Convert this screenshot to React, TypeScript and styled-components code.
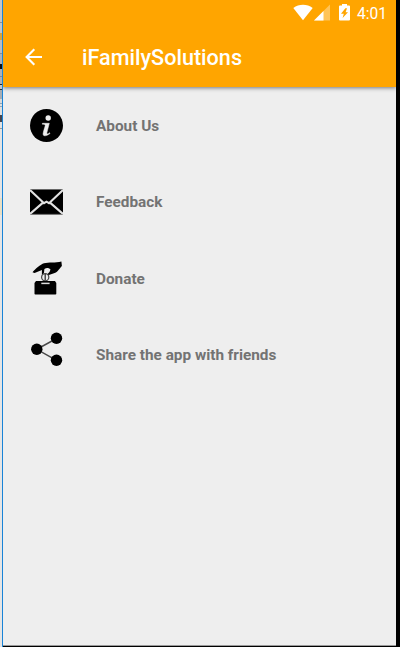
import React from "react";
import styled, { createGlobalStyle } from "styled-components";

const GlobalStyle = createGlobalStyle`
  * { box-sizing: border-box; }
  body { margin: 0; font-family: Roboto, sans-serif; background: #000; overflow: hidden; }
`;

const Desktop = styled.div`
  display: flex;
  width: 400px;
  height: 647px;
  background: #000;
`;

const WindowEdge = styled.div`
  flex: none;
  width: 3px;
  height: 647px;
  border-right: 1px solid #1883d7;
  background: linear-gradient(
    #c6c6c6 0 22px, #8d8f92 22px 23px, #c3c5c9 23px 33px, #d6a43c 33px 40px,
    #b9bcc1 40px 53px, #8c8e91 53px 54px, #adb1b6 54px 64px, #111 64px 69px,
    #adb1b6 69px 76px, #85888c 76px 77px, #adb1b6 77px 84px, #222 84px 85px,
    #c4c4c4 85px 89px, #333 89px 90px, #a7adb3 90px 99px, #d9d9d9 99px 103px,
    #8fa5b5 103px 104px, #e0e0e0 104px 106px, #8fa5b5 106px 107px,
    #e0e0e0 107px 115px, #46464e 115px 122px, #e2e2e2 122px 128px,
    #999 128px 129px, #e4e4e4 129px 198px, #e9dfc4 198px 215px, #e5e5e5 215px
  );
`;

const Screen = styled.div`
  display: flex;
  flex-direction: column;
  width: 393px;
  height: 646px;
  background: #eee;
  border-bottom: 1px solid #999;
`;

const Header = styled.header`
  flex: none;
  height: 87px;
  background: #ffa500;
  box-shadow: 0 1px 4px rgba(0, 0, 0, 0.5);
  clip-path: inset(0 0 -6px 0);
`;

const StatusBar = styled.div`
  display: flex;
  height: 27px;
  padding: 4px 9px 0 0;
  justify-content: flex-end;
  color: #fff;
`;

const Clock = styled.span`
  margin-left: 7px;
  padding-top: 1px;
  font-size: 15.6px;
  line-height: 19px;
`;

const Toolbar = styled.div`
  display: flex;
  align-items: center;
  height: 60px;
  padding: 0 0 0 22px;
`;

const Title = styled.h1`
  margin: 2px 0 0 40px;
  font-size: 21.6px;
  line-height: 28px;
  font-weight: 500;
  color: #fff;
`;

const Menu = styled.ul`
  display: flex;
  flex-direction: column;
  margin: 0;
  padding: 0;
  list-style: none;
`;

const MenuRow = styled.li`
  display: flex;
  align-items: center;
  height: 76.4px;
  padding-left: 27px;
`;

const IconSlot = styled.span<{ $raise?: number }>`
  flex: none;
  display: flex;
  width: 33px;
  margin: 0 33px ${(p) => (p.$raise ?? 0) * 2}px 0;
`;

const Label = styled.span`
  padding-top: 1.7px;
  font-size: 15.34px;
  line-height: 20px;
  font-weight: 700;
  color: #737373;
`;

const WifiIcon = () => (
  <svg width="20" height="17" viewBox="0 0 20 17">
    <path d="M.3 4C6-.2 14-.2 19.7 4L10 16.2Z" fill="#fff" />
  </svg>
);

const SignalIcon = () => (
  <svg width="16" height="17" viewBox="0 0 16 17">
    <path d="M0 16.5 16 .5v16Z" fill="#fff" opacity=".35" />
    <path d="M0 16.5 9.5 7v9.5Z" fill="#fff" />
  </svg>
);

const BatteryIcon = () => (
  <svg width="11" height="17" viewBox="0 0 11 17">
    <path d="M3 0h5v1.5h2q1 0 1 1V15.5q0 1-1 1H1q-1 0-1-1v-13q0-1 1-1h2Z" fill="#fff" />
    <path d="M6.4 4.3 2 9.7h2.8L3.6 14 9 8.2H6.6L8 4.3Z" fill="#ffa500" />
  </svg>
);

const BackIcon = () => (
  <svg width="17" height="18" viewBox="0 0 17 18">
    <path d="M17 9H1.8M9.3 1.2 1.6 9l7.7 7.8" fill="none" stroke="#fff" strokeWidth="2.1" />
  </svg>
);

const InfoIcon = () => (
  <svg width="33" height="33" viewBox="0 0 33 33">
    <circle cx="16.5" cy="16.5" r="16.5" fill="#000" />
    <circle cx="18.2" cy="9" r="2.7" fill="#eee" />
    <path
      d="M12.4 14.3h6.9l-2.4 9.3c-.4 1.8.9 1.6 2.7.1l.4.8c-2.2 2-6.9 3.7-6.9.4 0-1.5 1.7-6.7 2.1-8.2.2-1.2-1-1.5-2.9-1.5Z"
      fill="#eee"
      stroke="#eee"
      strokeWidth=".5"
    />
  </svg>
);

const MailIcon = () => (
  <svg width="33" height="26" viewBox="0 0 33 26">
    <path d="M0 .5h33v25H0Z" fill="#000" />
    <path d="M0 1 14 14.2l2.5-1.5 2.5 1.5L33 1M0 25l13-11.4M33 25 20 13.6" fill="none" stroke="#e2e2e2" strokeWidth="2.1" />
    <path d="M1.5.5h30" stroke="#666" />
    <path d="M1.5 25.4h30" stroke="#777" />
  </svg>
);

const DonateIcon = () => (
  <svg width="33" height="34" viewBox="0 0 33 34">
    <path d="M2.5 11.3C5 8 10.5 3.2 14 2.2 18.5.8 25.5 2 31.4.4l.5 4.5C30 6.5 28 11 24 12.3L18.8 14l-1.7-.6 2.4-2.5 1-2.4c-1.7-1.8-4-2-6.1-.4l-.5 4.1-2 1.5V9L4.6 11.9Z" fill="#000" />
    <circle cx="15.2" cy="16.2" r="3.6" fill="none" stroke="#444" strokeWidth="1.2" />
    <path d="M15.2 13v6.3" stroke="#333" strokeWidth="1.3" />
    <path d="M6 20h19l1.3 2v10.7q0 .8-.8.8H5.3q-.8 0-.8-.8V22Z" fill="#000" />
    <path d="M11.3 22.4h8.3" stroke="#ddd" strokeWidth="1.5" />
  </svg>
);

const ShareIcon = () => (
  <svg width="33" height="34" viewBox="0 0 33 34">
    <path d="M26.5 6.5 6.8 17.3l19.7 11" fill="none" stroke="#484848" strokeWidth="1.5" />
    <g fill="#000">
      <circle cx="26.5" cy="6.3" r="5.7" />
      <circle cx="6.8" cy="17.2" r="5.7" />
      <circle cx="26.5" cy="28.2" r="5.7" />
    </g>
  </svg>
);

const items = [
  { label: "About Us", Icon: InfoIcon },
  { label: "Feedback", Icon: MailIcon },
  { label: "Donate", Icon: DonateIcon },
  { label: "Share the app with friends", Icon: ShareIcon, raise: 5 },
];

const StatusIcons = styled.div`
  display: flex;
  align-items: flex-start;
`;

const Gap = styled.span<{ $w: number }>`
  width: ${(p) => p.$w}px;
`;

export default function App() {
  return (
    <>
      <GlobalStyle />
      <Desktop>
        <WindowEdge />
        <Screen>
          <Header>
            <StatusBar>
              <StatusIcons>
                <WifiIcon />
                <Gap $w={1} />
                <SignalIcon />
                <Gap $w={9} />
                <BatteryIcon />
              </StatusIcons>
              <Clock>4:01</Clock>
            </StatusBar>
            <Toolbar>
              <BackIcon />
              <Title>iFamilySolutions</Title>
            </Toolbar>
          </Header>
          <Menu>
            {items.map(({ label, Icon, raise }) => (
              <MenuRow key={label}>
                <IconSlot $raise={raise}>
                  <Icon />
                </IconSlot>
                <Label>{label}</Label>
              </MenuRow>
            ))}
          </Menu>
        </Screen>
      </Desktop>
    </>
  );
}
